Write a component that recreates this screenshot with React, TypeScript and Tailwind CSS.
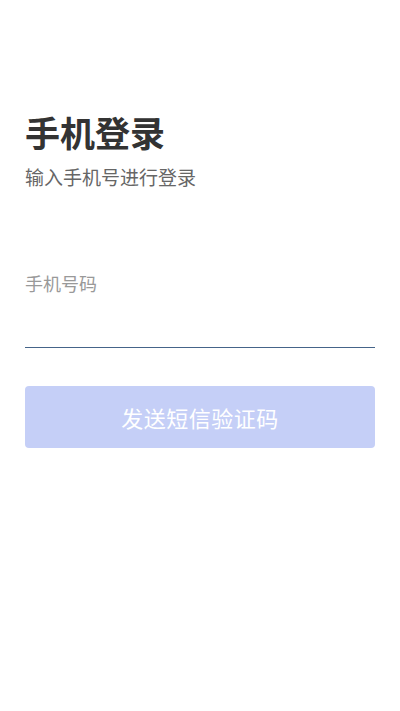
import React from "react";

export default function App() {
  return (
    <div
      className="min-h-[711px] w-full bg-white px-[25px] pt-[112px]"
      style={{ fontFamily: '"Noto Sans CJK SC", "Noto Sans", sans-serif' }}
    >
      <h1 className="text-[35px] leading-[40px] font-bold text-[#333333]">手机登录</h1>
      <p className="mt-[13px] text-[19px] leading-[24px] text-[#666666]">输入手机号进行登录</p>
      <div className="mt-[82px]">
        <label className="block text-[18px] leading-[24px] text-[#999999]">手机号码</label>
        <input
          type="tel"
          className="block h-[53px] w-full border-b border-[#456489] bg-transparent text-[18px] text-[#333333] outline-none"
        />
      </div>
      <button
        disabled
        className="mt-[38px] flex h-[62px] w-full items-center justify-center rounded-[4px] bg-[#c5cff7] text-[22px] tracking-[0.5px] text-white"
      >
        发送短信验证码
      </button>
    </div>
  );
}
